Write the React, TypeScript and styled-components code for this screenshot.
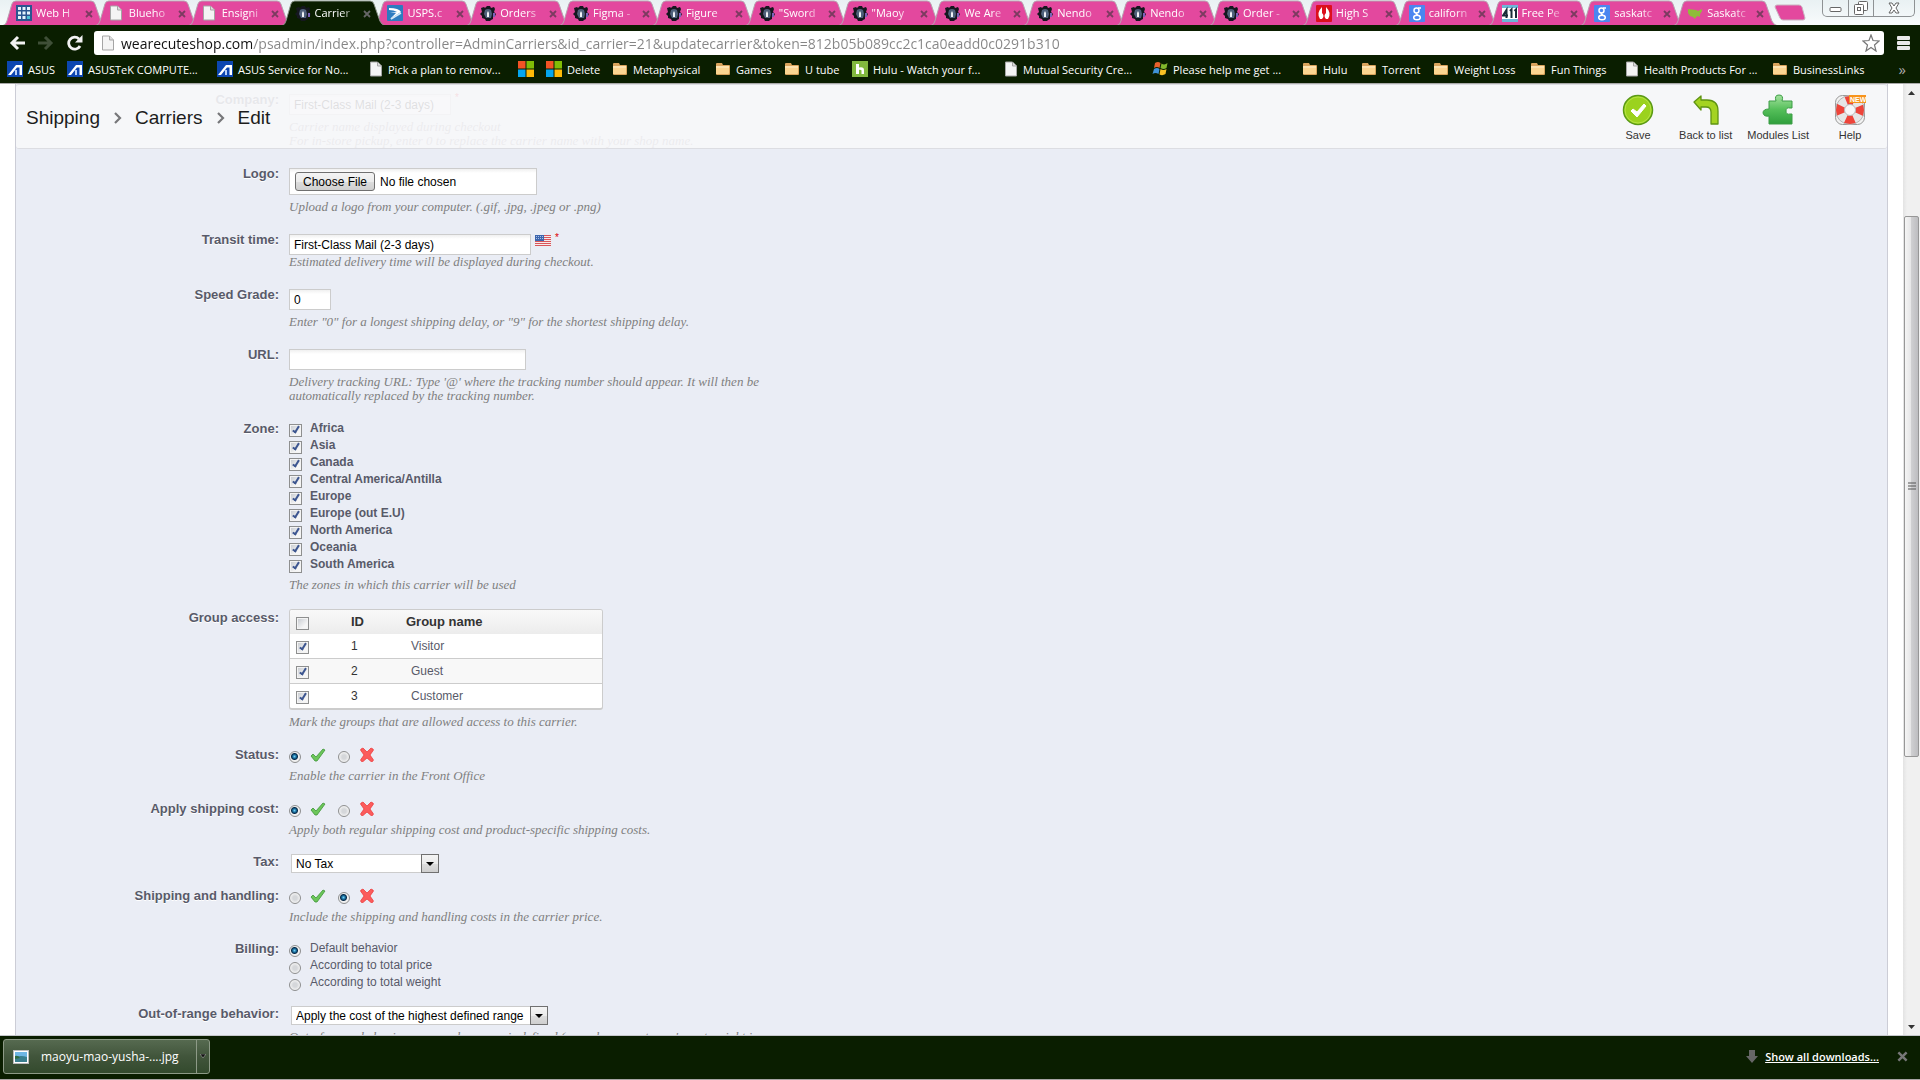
import React from 'react';
import styled, { createGlobalStyle, css } from 'styled-components';

const ui = '"Open Sans", "Noto Sans", sans-serif';
const arial = '"Liberation Sans", Arial, sans-serif';
const georgia = '"Liberation Serif", Georgia, serif';
const dark = '#0a1e00';
const pink = '#e3489e';

const Global = createGlobalStyle`
  *, *::before, *::after { box-sizing: border-box; }
  html, body { margin: 0; padding: 0; overflow: hidden; background: #fff; }
  button, input, select { margin: 0; font-family: inherit; }
  button { padding: 0; border: 0; background: none; color: inherit; cursor: pointer; }
  svg { display: block; flex: none; }
`;

/* ---------- browser frame ---------- */

const Window = styled.div`
  display: flex;
  flex-direction: column;
  height: 100vh;
  font-family: ${ui};
  border-bottom: 1px solid #a8a4a4;
`;

const Strip = styled.header`
  display: flex;
  height: 25px;
  padding-left: 6px;
  background: linear-gradient(#e9f1f3, #f8fbfc);
`;

const Tabs = styled.nav`
  display: flex;
  flex: 1;
  min-width: 0;
`;

const Tab = styled.a<{ $active?: boolean }>`
  position: relative;
  display: flex;
  flex: 1 1 0;
  align-items: center;
  min-width: 0;
  padding: 1px 6px 0 10px;
  color: #fff;
  font-size: 11px;
  line-height: 16px;
  text-decoration: none;
  z-index: ${(p) => (p.$active ? 1 : 0)};
`;

const TabShape = styled.svg`
  position: absolute;
  left: -3px;
  top: 0;
  width: calc(100% + 10px);
  height: 100%;
`;

const TabIcon = styled.span`
  position: relative;
  width: 16px;
  margin-right: 4px;
`;

const TabTitle = styled.span`
  position: relative;
  flex: 1;
  white-space: nowrap;
  mask-image: linear-gradient(90deg, #000 65%, rgba(0, 0, 0, 0.25));
`;

const TabClose = styled.button<{ $active?: boolean }>`
  position: relative;
  margin: 1px 0 0 8px;
  color: ${(p) => (p.$active ? '#666' : '#7c3a60')};
`;

const NewTab = styled.button`
  width: 41px;
  padding-left: 4px;
`;

const Controls = styled.div`
  display: flex;
  height: 17px;
  margin: 0 5px 0 11px;
  border: 1px solid #8e9294;
  border-top: 0;
  border-radius: 0 0 5px 5px;
`;

const Control = styled.button<{ $wide?: boolean }>`
  display: flex;
  align-items: center;
  justify-content: center;
  width: ${(p) => (p.$wide ? '41px' : '25px')};
  & + & { border-left: 1px solid #8e9294; }
`;

const Toolbar = styled.div`
  padding-top: 6px;
  background: ${dark};
  border-bottom: 1px solid #a9a9a9;
`;

const NavRow = styled.div`
  display: flex;
  align-items: center;
  gap: 13px;
  padding: 0 10px 0 9px;
`;

const Omnibox = styled.label`
  display: flex;
  flex: 1;
  align-items: center;
  gap: 6px;
  height: 24px;
  margin-left: -2px;
  padding: 0 4px 0 7px;
  border-radius: 3px;
  background: #fff;
`;

const Address = styled.input`
  flex: 1;
  min-width: 0;
  height: 24px;
  padding: 0;
  border: 0;
  outline: 0;
  color: transparent;
  font-size: 14px;
  line-height: 22px;
  background: linear-gradient(90deg, #111 131px, #858585 131px);
  background-clip: text;
`;

const Bookmarks = styled.nav`
  display: flex;
  align-items: center;
  height: 28px;
  padding-left: 7px;
  color: #fff;
  font-size: 11px;
`;

const Bookmark = styled.a<{ $w: number }>`
  display: flex;
  align-items: center;
  gap: 5px;
  width: ${(p) => p.$w}px;
  color: inherit;
  text-decoration: none;
  white-space: nowrap;
`;

const More = styled.button`
  margin: 0 14px 0 auto;
  font-size: 15px;
  line-height: 16px;
  color: #aaa;
`;

const Viewport = styled.main`
  display: flex;
  flex: 1;
  min-height: 0;
  background: #fff;
`;

const Panel = styled.div`
  position: relative;
  flex: 1;
  min-width: 0;
  margin: 0 15px;
  overflow: hidden;
  border: solid #cccdd6;
  border-width: 0 1px;
  background: #eaedf5;
  font-family: ${arial};
`;

const ScrollBar = styled.div`
  display: grid;
  grid-template-rows: 17px 115fr 540fr 261fr 17px;
  width: 17px;
  background: linear-gradient(90deg, #e3e3e3, #f0f0f0 4px, #f0f0f0);
`;

const ScrollArrow = styled.button<{ $down?: boolean }>`
  grid-row: ${(p) => (p.$down ? 5 : 1)};
  display: flex;
  align-items: center;
  justify-content: center;
`;

const Thumb = styled.div`
  grid-row: 3;
  display: flex;
  align-items: center;
  justify-content: center;
  margin: 0 1px;
  border: 1px solid #979797;
  border-radius: 2px;
  background: linear-gradient(90deg, #f5f5f5, #e6e6e7 45%, #cfcfd1 50%, #bdbdc0);
`;

const Downloads = styled.footer`
  display: flex;
  align-items: center;
  height: 44px;
  padding: 0 12px 2px 3px;
  border-top: 1px solid #c6c8cc;
  background: ${dark};
  color: #fff;
  font-size: 12px;
`;

const DownloadItem = styled.div`
  display: flex;
  height: 35px;
  margin-right: auto;
  border: 1px solid #8d9a87;
  border-radius: 3px;
  background: linear-gradient(#566a50, #41553b 50%, #334a2d);
`;

const DownloadFile = styled.button`
  display: flex;
  align-items: center;
  gap: 12px;
  padding: 0 17px 0 9px;
  font-size: 12px;
`;

const DownloadMenu = styled.button`
  display: flex;
  align-items: center;
  justify-content: center;
  width: 13px;
  border-left: 1px solid #8d9a87;
`;

const AllDownloads = styled.a`
  margin: 0 18px 0 7px;
  color: #fff;
  font-size: 11px;
  font-weight: 600;
  line-height: 16px;
`;

const CloseBar = styled.button`
  color: #777;
`;

/* ---------- admin page ---------- */

const PageHead = styled.div`
  position: absolute;
  inset: 0 0 auto 0;
  z-index: 2;
  display: flex;
  align-items: center;
  justify-content: space-between;
  height: 65px;
  padding: 3px 11px 0 10px;
  border: solid #dcdde2;
  border-width: 1px 0;
  border-radius: 3px;
  background: rgba(247, 247, 249, 0.9);
`;

const Crumbs = styled.nav`
  display: flex;
  align-items: center;
  gap: 13px;
  font-size: 19px;
  line-height: 24px;
  a { color: #1c1c1c; text-decoration: none; }
`;

const Tools = styled.div`
  display: flex;
  gap: 15px;
`;

const Tool = styled.button`
  display: flex;
  flex-direction: column;
  align-items: center;
  gap: 2px;
  min-width: 52px;
  color: #333;
  font-size: 11px;
  line-height: 14px;
  white-space: nowrap;
`;

const Form = styled.form`
  padding-top: 7px;
`;

const Row = styled.div<{ $gap?: number }>`
  display: flex;
  gap: 10px;
  margin-bottom: ${(p) => p.$gap ?? 17}px;
`;

const labelText = css`
  width: 263px;
  flex: none;
  padding-top: 1px;
  color: #585a69;
  font-size: 13px;
  font-weight: bold;
  line-height: 16px;
  text-align: right;
  text-shadow: 0 1px 0 #fff;
`;
const Label = styled.label`${labelText}`;
const GroupLabel = styled.span`${labelText}`;

const Field = styled.div`
  width: 500px;
`;

const Hint = styled.p<{ $tight?: boolean }>`
  margin: ${(p) => (p.$tight ? 0 : 5)}px 0 0;
  color: #7f7f7f;
  font: italic 13px/14px ${georgia};
`;

const Inline = styled.div`
  display: flex;
  gap: 4px;
`;

const boxed = css`
  display: block;
  margin-top: 3px;
  border: 1px solid #ccc;
  border-radius: 0;
  background: linear-gradient(#f0f0f0, #fff 4px);
  color: #000;
  font-size: 12px;
`;

const TextInput = styled.input<{ $w: number }>`
  ${boxed}
  width: ${(p) => p.$w}px;
  height: 21px;
  padding: 0 4px;
`;

const FileInput = styled.input`
  ${boxed}
  width: 248px;
  height: 27px;
  padding: 3px 5px;
  line-height: 14px;
  &::file-selector-button {
    height: 19px;
    margin: 0 5px 0 0;
    padding: 0 7px;
    border: 1px solid #707070;
    border-radius: 3px;
    background: linear-gradient(#f4f4f4, #ebebeb 50%, #dddddd 51%, #cfcfcf);
    font: 12px/16px ${arial};
  }
`;

const FlagButton = styled.button`
  align-self: flex-start;
  margin-top: 4px;
`;

const Star = styled.sup`
  color: #d00;
  font-size: 10px;
  line-height: 14px;
`;

const Check = styled.input`
  position: relative;
  flex: none;
  width: 13px;
  height: 13px;
  appearance: none;
  border: 1px solid #8e8f8f;
  background: linear-gradient(135deg, #c4c8ce, #f6f6f6 70%);
  outline: 1px solid #f4f4f4;
  outline-offset: -2px;
  &:checked::after {
    content: '';
    position: absolute;
    left: 4px;
    top: 0;
    width: 4px;
    height: 8px;
    border: solid #3d5690;
    border-width: 0 2px 2px 0;
    transform: rotate(32deg);
  }
`;

const Radio = styled.input`
  flex: none;
  width: 12px;
  height: 12px;
  appearance: none;
  border: 1px solid #8e8f8f;
  border-radius: 50%;
  background: radial-gradient(circle, #d5d7da 0 2px, #f3f3f3 5px);
  &:checked {
    background: radial-gradient(circle at 45% 45%, #6fd0f5 0, #10608f 2px, #0b2c48 3px, #f0f0f0 4px);
  }
`;

const Option = styled.label<{ $bold?: boolean }>`
  display: flex;
  align-items: flex-end;
  gap: ${(p) => (p.$bold ? 8 : 9)}px;
  height: 17px;
  color: #585a69;
  font-size: 12px;
  font-weight: ${(p) => (p.$bold ? 'bold' : 'normal')};
  span { align-self: flex-start; line-height: 16px; }
`;

const Switch = styled.div`
  display: flex;
  height: 17px;
  margin-bottom: 6px;
  label { display: flex; align-items: flex-end; gap: 9px; margin-right: 12px; }
  svg { align-self: flex-start; margin-top: 1px; }
`;

const SelectBox = styled.div<{ $w: number }>`
  position: relative;
  width: ${(p) => p.$w}px;
  margin: 1px 0 0 2px;
  &::before {
    content: '';
    position: absolute;
    right: 0;
    top: 0;
    width: 18px;
    height: 19px;
    border: 1px solid #707070;
    background: linear-gradient(#f4f4f4, #ebebeb 50%, #dddddd 51%, #cfcfcf);
    pointer-events: none;
  }
  &::after {
    content: '';
    position: absolute;
    right: 5px;
    top: 8px;
    border: 4px solid transparent;
    border-top-color: #000;
    border-bottom: 0;
    pointer-events: none;
  }
`;

const Select = styled.select`
  display: block;
  width: 100%;
  height: 19px;
  padding: 0 18px 0 4px;
  appearance: none;
  border: 1px solid #ccc;
  border-radius: 0;
  background: #fff;
  color: #000;
  font-size: 12px;
`;

const Table = styled.table`
  width: 314px;
  border: 1px solid #ccc;
  border-bottom-width: 2px;
  border-radius: 3px;
  border-spacing: 0;
  overflow: hidden;
  background: #fff;
  color: #585a69;
  font-size: 12px;
  line-height: 14px;
  th, td { height: 25px; padding: 0; text-align: left; border-bottom: 1px solid #ccc; }
  thead th { height: 24px; border-bottom: 0; background: linear-gradient(#f9f9f9, #ececec); color: #333; font-size: 13px; }
  tbody tr:nth-child(even) td { background: #f8f8f8; }
  tbody tr:last-child td { height: 24px; border-bottom: 0; }
  th:first-child, td:first-child { width: 61px; padding: 3px 0 0 6px; }
  input { display: block; }
  th:nth-child(2), td:nth-child(2) { width: 55px; color: #333; }
  td:nth-child(3) { padding-left: 5px; }
`;

/* ---------- drawings ---------- */

const Doc = () => (
  <svg width="14" height="16" viewBox="0 0 14 16"><path d="M1.500 1h7l4 4v10h-11z" fill="#f4f4f4" stroke="#a5a5a5" /><path d="M8.500 1v4h4" fill="#ddd" stroke="#a5a5a5" /></svg>
);
const Folder = () => (
  <svg width="16" height="16" viewBox="0 0 16 16"><path d="M1 3q0-1 1-1h5l1 2h6q1 0 1 1v8q0 1-1 1H2q-1 0-1-1z" fill="#d9a35c" /><path d="M1 5h13v7q0 1-1 1H1z" fill="#fbd591" /><path d="M1 6h13" stroke="#fff0ce" /></svg>
);
const Asus = () => (
  <svg width="16" height="16" viewBox="0 0 16 16"><rect width="16" height="16" fill="#0c46b0" /><path d="M1 14 9 4h6v10h-2.500V6.500H10L4 14z" fill="#fff" /><path d="M8 9h2v5H8z" fill="#b9d0f5" /></svg>
);
const Squares = () => (
  <svg width="16" height="16" viewBox="0 0 16 16"><path fill="#f35325" d="M0 0h7.500v7.500H0z" /><path fill="#81bc06" d="M8.500 0H16v7.500H8.500z" /><path fill="#05a6f0" d="M0 8.500h7.500V16H0z" /><path fill="#ffba08" d="M8.500 8.500H16V16H8.500z" /></svg>
);
const Flag = () => (
  <svg width="16" height="16" viewBox="0 0 16 16"><path fill="#e8602c" d="M3 2q3-2 5.500 0L7.500 7Q5 5 2 7z" /><path fill="#83b82c" d="M9.500 2.500q3 2 6-.5l-1 5q-3 2-6 0z" /><path fill="#3f92d8" d="M2 8q3-2 5.500 0l-1 5q-3-2-6 0z" /><path fill="#f8c224" d="M8.500 8q3 2 6 0l-1 5q-3 2-6 .5z" /></svg>
);
const Hulu = () => (
  <svg width="16" height="16" viewBox="0 0 16 16"><rect width="16" height="16" fill="#82b93f" /><path d="M4 3h3v3.500q5-1 5 2.500v4H9.500V9.500Q9.500 8.500 7 8.700V13H4z" fill="#fff" /></svg>
);
const Grid = () => (
  <svg width="16" height="16" viewBox="0 0 16 16"><rect width="16" height="16" fill="#2b5590" /><path d="M2 2h3v3H2zM6.500 2h3v3h-3zM11 2h3v3h-3zM2 6.500h3v3H2zM6.500 6.500h3v3h-3zM11 6.500h3v3h-3zM2 11h3v3H2zM6.500 11h3v3h-3z" fill="#e6f3fc" /><path d="M11 11h3v3h-3z" fill="#4cc1d5" /></svg>
);
const Usps = () => (
  <svg width="16" height="16" viewBox="0 0 16 16"><rect width="16" height="16" rx="1" fill="#2d7cc0" /><path d="M2 3q10 0 12 4L3 14l6-6H3l7-1Q7 5 2 5z" fill="#fff" /><path d="M4 14 14 8" stroke="#d3e8f6" strokeWidth="1.500" /></svg>
);
const Shop = () => (
  <svg width="16" height="17" viewBox="0 0 16 17"><path d="M1 3l3-1 1 1 2-2h3l1 2 3-1 1 2-1 3 2 2-1 2-2 1v2l-2 1-1 1H6l-1-2-3-1v-2L0 9l2-2z" fill="#15171f" /><path d="M5 5q3-2 6 0l1 4-1 4H6L4 9z" fill="#50617b" /><path d="M8 6l1 2v4H7V8z" fill="#f1f3f6" /><path d="M13 8h2v4h-2z" fill="#7a62b8" /></svg>
);
const Flames = () => (
  <svg width="16" height="17" viewBox="0 0 16 17"><rect width="16" height="17" rx="1" fill="#dc0f1c" /><path d="M6 2q-6 6-2 12h2q3-3 0-6zM10 2q6 6 2 12h-2q-3-3 0-6z" fill="#fff" /></svg>
);
const Google = () => (
  <svg width="16" height="17" viewBox="0 0 16 17"><rect width="16" height="17" rx="1" fill="#4b86f0" /><g fill="none" stroke="#fff" strokeWidth="1.500"><ellipse cx="7.500" cy="5.500" rx="2.500" ry="2.500" /><ellipse cx="8" cy="12.500" rx="3.300" ry="2.300" /><path d="M9 3h3M8 8q-2 1 1 2" /></g></svg>
);
const Four = () => (
  <svg width="16" height="17" viewBox="0 0 16 17"><rect width="16" height="17" fill="#fff" /><path d="M0 0h16v3H0zM0 14h16v3H0z" fill="#6cb6d8" /><path d="M4.500 13V5L1 10.500h5M9.500 13V4.500L8 6M14 13V4.500L12.500 6" stroke="#182c38" strokeWidth="2" fill="none" /></svg>
);
const Usa = () => (
  <svg width="16" height="16" viewBox="0 0 16 16"><path d="M1 4l8 1 2 1 4-2v2l-2 3v3l-2-1-2 1-1 2-2-2-3-1-2-3z" fill="#8fbc3a" /></svg>
);
const Cross = ({ size = 8 }: { size?: number }) => (
  <svg width={size} height={size} viewBox="0 0 8 8"><path d="M1 1l6 6M7 1 1 7" stroke="currentColor" strokeWidth="1.800" /></svg>
);
const Tick = () => (
  <svg width="16" height="16" viewBox="0 0 16 16"><path d="M1 9l2-2 3 3 7-8 2 1L7 14H5z" fill="#6cc659" stroke="#3d9438" strokeWidth=".8" /></svg>
);
const Ex = () => (
  <svg width="16" height="16" viewBox="0 0 16 16"><path d="M2 2l2-1 4 4 4-4 2 1 .5 1L11 8l3.500 5-1 1.500H12L8 11l-4 3.500H2.500l-1-1.500L5 8 1.500 3z" fill="#fb5c5c" stroke="#ec3434" strokeWidth=".7" /></svg>
);
const UsFlag = () => (
  <svg width="16" height="11" viewBox="0 0 16 11" aria-label="English"><rect width="16" height="11" fill="#f5e9ea" /><path d="M0 .5h16M0 2.500h16M0 4.500h16M0 6.500h16M0 8.500h16M0 10.500h16" stroke="#d9555a" /><rect width="9" height="6" fill="#3c65ad" /><path d="M1 1.500h7M1 3.500h7" stroke="#a9c0e6" strokeDasharray="1 1" /></svg>
);
const Chevron = () => (
  <svg width="9" height="14" viewBox="0 0 9 14"><path d="M2 2l5 5-5 5" fill="none" stroke="#77777a" strokeWidth="2.200" /></svg>
);

const SaveIcon = () => (
  <svg width="32" height="32" viewBox="0 0 32 32"><circle cx="16" cy="16" r="14.500" fill="#9bd21e" stroke="#5b9a16" strokeWidth="1.500" /><circle cx="16" cy="16" r="13" fill="none" stroke="#b6e344" /><path d="M9 17l2-2 4 3 7-8 2 2-9 11z" fill="#fff" stroke="#fff" strokeLinejoin="round" /></svg>
);
const BackIcon = () => (
  <svg width="32" height="32" viewBox="0 0 32 32"><path d="M4 8l7-6v4h6q11 0 11 11v13h-7V18q0-5-5-5h-5v3z" fill="#a4d321" stroke="#5f9412" strokeWidth="1.300" strokeLinejoin="round" /></svg>
);
const PuzzleIcon = () => (
  <svg width="32" height="32" viewBox="0 0 32 32"><defs><linearGradient id="pz" x1="0" y1="0" x2="0" y2="1"><stop offset="0" stopColor="#a5e29f" /><stop offset=".5" stopColor="#55bf5a" /><stop offset="1" stopColor="#2f9f3c" /></linearGradient></defs><path d="M7 7h7Q12 1 17 1t3 6h10v7h-2q-4-1-4 3t4 3h2v10H7v-8q-5 1-6-3 0-4 6-4z" fill="url(#pz)" stroke="#3c9d46" /></svg>
);
const HelpIcon = () => (
  <svg width="32" height="32" viewBox="0 0 32 32">
    <rect x="1.500" y="1.500" width="29" height="29" rx="7" fill="#f2f2f2" stroke="#999" />
    <circle cx="16" cy="16" r="10" fill="none" stroke="#e6e6e6" strokeWidth="9" />
    <circle cx="16" cy="16" r="10" fill="none" stroke="#ee443a" strokeWidth="9" strokeDasharray="8.500 7.208" strokeDashoffset="4.250" />
    <circle cx="16" cy="16" r="14.500" fill="none" stroke="#b5b5b5" />
    <circle cx="16" cy="16" r="5.500" fill="#f7f7f9" stroke="#b9b9b9" />
    <rect x="15" y="1" width="17" height="8" fill="#f7941d" />
    <text x="16" y="8" fontSize="7" fontWeight="bold" fontFamily="Liberation Sans" fill="#fff">NEW</text>
  </svg>
);

/* ---------- data ---------- */

const tabs: [React.FC, string][] = [
  [Grid, 'Web H'], [Doc, 'Blueho'], [Doc, 'Ensigni'], [Shop, 'Carrier'], [Usps, 'USPS.c'],
  [Shop, 'Orders'], [Shop, 'Figma -'], [Shop, 'Figure'], [Shop, '"Sword'], [Shop, '"Maoy'],
  [Shop, 'We Are'], [Shop, 'Nendo'], [Shop, 'Nendo'], [Shop, 'Order -'], [Flames, 'High S'],
  [Google, 'californ'], [Four, 'Free Pe'], [Google, 'saskatc'], [Usa, 'Saskatc'],
];

const bookmarks: [React.FC, string, number][] = [
  [Asus, 'ASUS', 60], [Asus, 'ASUSTeK COMPUTE...', 150], [Asus, 'ASUS Service for No...', 152],
  [Doc, 'Pick a plan to remov...', 149], [Squares, '', 28], [Squares, 'Delete', 66], [Folder, 'Metaphysical', 103],
  [Folder, 'Games', 69], [Folder, 'U tube', 68], [Hulu, 'Hulu - Watch your f...', 152],
  [Doc, 'Mutual Security Cre...', 148], [Flag, 'Please help me get ...', 150], [Folder, 'Hulu', 59],
  [Folder, 'Torrent', 72], [Folder, 'Weight Loss', 97], [Folder, 'Fun Things', 95],
  [Doc, 'Health Products For ...', 147], [Folder, 'BusinessLinks', 100],
];

const zones = ['Africa', 'Asia', 'Canada', 'Central America/Antilla', 'Europe', 'Europe (out E.U)', 'North America', 'Oceania', 'South America'];
const groups = ['Visitor', 'Guest', 'Customer'];

const YesNo = ({ name, value }: { name: string; value: boolean }) => (
  <Switch>
    <label><Radio type="radio" name={name} defaultChecked={value} aria-label="Yes" /><Tick /></label>
    <label><Radio type="radio" name={name} defaultChecked={!value} aria-label="No" /><Ex /></label>
  </Switch>
);

export default function App() {
  return (
    <Window>
      <Global />
      <Strip>
        <Tabs>
          {tabs.map(([Icon, title], i) => {
            const active = i === 3;
            return (
              <Tab key={i} href="#" $active={active}>
                <TabShape viewBox="0 0 104 25" preserveAspectRatio="none">
                  <path d="M0 25.500Q3 25 4 21L9 4Q10 1 13 1H89Q92 1 93 4L99 21Q101 25 104 25.500z" fill={active ? dark : pink} stroke={active ? '#8b958a' : '#b7a3b0'} strokeWidth="1" />
                </TabShape>
                <TabIcon><Icon /></TabIcon>
                <TabTitle>{title}</TabTitle>
                <TabClose $active={active} aria-label="Close tab"><Cross /></TabClose>
              </Tab>
            );
          })}
        </Tabs>
        <NewTab aria-label="New tab">
          <svg width="32" height="17" viewBox="0 0 32 17"><path d="M3 1h22q2 0 3 2l3 11q0 2-2 2H9q-2 0-3-2L1 3q0-2 2-2z" fill={pink} stroke="#c9b4c1" /></svg>
        </NewTab>
        <Controls>
          <Control aria-label="Minimize"><svg width="13" height="7" viewBox="0 0 13 7"><rect x="1" y="2.500" width="11" height="4" rx="1" fill="#fff" stroke="#666" /></svg></Control>
          <Control aria-label="Restore"><svg width="14" height="14" viewBox="0 0 14 14" fill="#fff" stroke="#666"><rect x="4.500" y=".5" width="9" height="9" rx="1" /><rect x=".5" y="3.500" width="9" height="10" rx="1" /><rect x="3.500" y="6.500" width="3" height="3" /></svg></Control>
          <Control $wide aria-label="Close"><svg width="12" height="12" viewBox="0 0 12 12"><path d="M1 1h3l2 3 2-3h3L8 6l3 5H8L6 8l-2 3H1l3-5z" fill="#fff" stroke="#666" /></svg></Control>
        </Controls>
      </Strip>

      <Toolbar>
        <NavRow>
          <button aria-label="Back"><svg width="16" height="16" viewBox="0 0 16 16"><path d="M9 2 3 8l6 6M3 8h13" fill="none" stroke="#f2f2f2" strokeWidth="3" /></svg></button>
          <button aria-label="Forward"><svg width="16" height="16" viewBox="0 0 16 16"><path d="M7 2l6 6-6 6M13 8H0" fill="none" stroke="#3f4f37" strokeWidth="3" /></svg></button>
          <button aria-label="Reload"><svg width="16" height="16" viewBox="0 0 16 16"><path d="M13 11a6 6 0 1 1-1-7" fill="none" stroke="#f2f2f2" strokeWidth="2.800" /><path d="M15.500 0v7.500H8z" fill="#f2f2f2" /></svg></button>
          <Omnibox>
            <Doc />
            <Address aria-label="Address" readOnly value="wearecuteshop.com/psadmin/index.php?controller=AdminCarriers&id_carrier=21&updatecarrier&token=812b05b089cc2c1ca0eadd0c0291b310" />
            <svg width="18" height="18" viewBox="0 0 18 18"><path d="M9 1l2 5.500 6 .5-4.500 4 1.500 6-5-3.500L4 17l1.500-6L1 7l6-.5z" fill="#fff" stroke="#777" strokeWidth="1.200" /></svg>
          </Omnibox>
          <button aria-label="Menu"><svg width="13" height="14" viewBox="0 0 13 14" fill="#e9e9e9"><rect width="13" height="4" rx="1" /><rect y="5" width="13" height="4" rx="1" /><rect y="10" width="13" height="4" rx="1" /></svg></button>
        </NavRow>
        <Bookmarks>
          {bookmarks.map(([Icon, text, w], i) => (
            <Bookmark key={i} href="#" $w={w}><Icon />{text}</Bookmark>
          ))}
          <More aria-label="More bookmarks">»</More>
        </Bookmarks>
      </Toolbar>

      <Viewport>
        <Panel>
          <PageHead>
            <Crumbs>
              <a href="#">Shipping</a><Chevron /><a href="#">Carriers</a><Chevron /><a href="#">Edit</a>
            </Crumbs>
            <Tools>
              <Tool><SaveIcon />Save</Tool>
              <Tool><BackIcon />Back to list</Tool>
              <Tool><PuzzleIcon />Modules List</Tool>
              <Tool><HelpIcon />Help</Tool>
            </Tools>
          </PageHead>

          <Form>
            <Row>
              <Label htmlFor="company">Company:</Label>
              <Field>
                <Inline><TextInput id="company" $w={162} defaultValue="First-Class Mail (2-3 days)" /><Star>*</Star></Inline>
                <Hint>Carrier name displayed during checkout<br />For in-store pickup, enter 0 to replace the carrier name with your shop name.</Hint>
              </Field>
            </Row>
            <Row>
              <Label htmlFor="logo">Logo:</Label>
              <Field>
                <FileInput id="logo" type="file" />
                <Hint>Upload a logo from your computer. (.gif, .jpg, .jpeg or .png)</Hint>
              </Field>
            </Row>
            <Row>
              <Label htmlFor="transit">Transit time:</Label>
              <Field>
                <Inline>
                  <TextInput id="transit" $w={242} defaultValue="First-Class Mail (2-3 days)" />
                  <FlagButton type="button" aria-label="Language"><UsFlag /></FlagButton>
                  <Star>*</Star>
                </Inline>
                <Hint $tight>Estimated delivery time will be displayed during checkout.</Hint>
              </Field>
            </Row>
            <Row>
              <Label htmlFor="grade">Speed Grade:</Label>
              <Field>
                <TextInput id="grade" $w={42} defaultValue="0" />
                <Hint>Enter "0" for a longest shipping delay, or "9" for the shortest shipping delay.</Hint>
              </Field>
            </Row>
            <Row>
              <Label htmlFor="url">URL:</Label>
              <Field>
                <TextInput id="url" $w={237} />
                <Hint>Delivery tracking URL: Type '@' where the tracking number should appear. It will then be automatically replaced by the tracking number.</Hint>
              </Field>
            </Row>
            <Row>
              <GroupLabel>Zone:</GroupLabel>
              <Field>
                {zones.map((z) => (
                  <Option key={z} $bold><Check type="checkbox" defaultChecked /><span>{z}</span></Option>
                ))}
                <Hint>The zones in which this carrier will be used</Hint>
              </Field>
            </Row>
            <Row>
              <GroupLabel>Group access:</GroupLabel>
              <Field>
                <Table>
                  <thead>
                    <tr><th><Check type="checkbox" aria-label="All groups" /></th><th>ID</th><th>Group name</th></tr>
                  </thead>
                  <tbody>
                    {groups.map((g, i) => (
                      <tr key={g}><td><Check type="checkbox" defaultChecked aria-label={g} /></td><td>{i + 1}</td><td>{g}</td></tr>
                    ))}
                  </tbody>
                </Table>
                <Hint>Mark the groups that are allowed access to this carrier.</Hint>
              </Field>
            </Row>
            <Row>
              <GroupLabel>Status:</GroupLabel>
              <Field><YesNo name="status" value /><Hint $tight>Enable the carrier in the Front Office</Hint></Field>
            </Row>
            <Row $gap={16}>
              <GroupLabel>Apply shipping cost:</GroupLabel>
              <Field><YesNo name="cost" value /><Hint $tight>Apply both regular shipping cost and product-specific shipping costs.</Hint></Field>
            </Row>
            <Row $gap={14}>
              <Label htmlFor="tax">Tax:</Label>
              <Field><SelectBox $w={148}><Select id="tax"><option>No Tax</option></Select></SelectBox></Field>
            </Row>
            <Row $gap={16}>
              <GroupLabel>Shipping and handling:</GroupLabel>
              <Field><YesNo name="handling" value={false} /><Hint $tight>Include the shipping and handling costs in the carrier price.</Hint></Field>
            </Row>
            <Row $gap={14}>
              <GroupLabel>Billing:</GroupLabel>
              <Field>
                {['Default behavior', 'According to total price', 'According to total weight'].map((t, i) => (
                  <Option key={t}><Radio type="radio" name="billing" defaultChecked={i === 0} /><span>{t}</span></Option>
                ))}
              </Field>
            </Row>
            <Row>
              <Label htmlFor="range">Out-of-range behavior:</Label>
              <Field>
                <SelectBox $w={257}><Select id="range"><option>Apply the cost of the highest defined range</option></Select></SelectBox>
                <Hint>Out-of-range behavior occurs when none is defined (e.g. when a customer's cart weight is greater than the highest range limit)</Hint>
              </Field>
            </Row>
          </Form>
        </Panel>
        <ScrollBar>
          <ScrollArrow aria-label="Scroll up"><svg width="7" height="4" viewBox="0 0 7 4"><path d="M0 4 3.500 0 7 4z" fill="#333" /></svg></ScrollArrow>
          <Thumb><svg width="8" height="8" viewBox="0 0 8 8"><path d="M0 1h8M0 4h8M0 7h8" stroke="#555" /></svg></Thumb>
          <ScrollArrow $down aria-label="Scroll down"><svg width="7" height="4" viewBox="0 0 7 4"><path d="M0 0h7L3.500 4z" fill="#333" /></svg></ScrollArrow>
        </ScrollBar>
      </Viewport>

      <Downloads>
        <DownloadItem>
          <DownloadFile>
            <svg width="16" height="14" viewBox="0 0 16 14"><rect x=".5" y=".5" width="15" height="13" fill="#fff" stroke="#bbb" /><path d="M2 2h12v5H2z" fill="#6fb6e4" /><path d="M2 7q6-2 12 0v5H2z" fill="#3a7f8e" /><path d="M2 6q3-1 5 2l-5 1z" fill="#2e6b42" /></svg>
            maoyu-mao-yusha-....jpg
          </DownloadFile>
          <DownloadMenu aria-label="Download options"><svg width="6" height="5" viewBox="0 0 6 5"><path d="M0 0h6L3 4z" fill="#111" stroke="#bbb" strokeWidth=".5" /></svg></DownloadMenu>
        </DownloadItem>
        <svg width="12" height="13" viewBox="0 0 12 13"><path d="M3 0h6v6h3l-6 7-6-7h3z" fill="#666" /></svg>
        <AllDownloads href="#">Show all downloads...</AllDownloads>
        <CloseBar aria-label="Close downloads"><Cross size={11} /></CloseBar>
      </Downloads>
    </Window>
  );
}
